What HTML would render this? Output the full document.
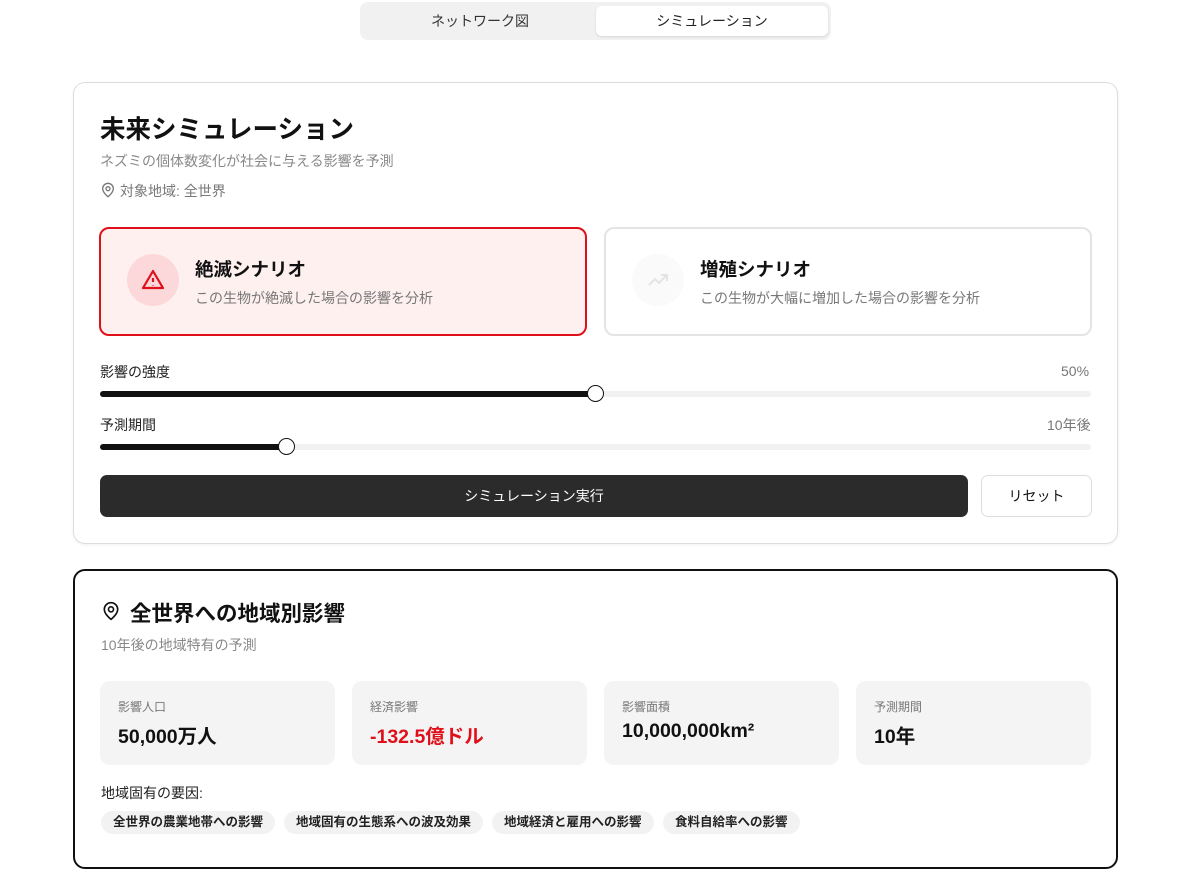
<!DOCTYPE html>
<html><head><meta charset="utf-8"><style>
*{box-sizing:border-box;margin:0;padding:0}
body{width:1200px;height:845px;overflow:hidden;background:#fff;font-family:"Liberation Sans","Noto Sans CJK JP",sans-serif;color:#111;position:relative}
.a{position:absolute}
.tabs{left:360px;top:2px;width:471px;height:38px;background:#f1f1f1;border-radius:8px}
.tab{top:4px;height:30px;width:232px;font-size:14px;line-height:30px;text-align:center;color:#222}
.card{left:73px;width:1045px;border-radius:12px}
.sc{top:227px;width:488px;height:109px;border-radius:10px}
.ic{left:26px;top:25px;width:52px;height:52px;border-radius:50%}
.st{left:94px;top:27px;font-size:18.5px;font-weight:bold}
.sd{left:94px;top:59px;font-size:14px;color:#777}
.lbl{font-size:14px;color:#222}
.track{left:100px;width:991px;height:6px;background:#f1f1f1;border-radius:3px}
.fill{left:0;top:0;height:6px;background:#111;border-radius:3px}
.thumb{width:17px;height:17px;border-radius:50%;background:#fff;border:1.5px solid #111}
.box{top:681px;width:235px;height:84px;background:#f4f4f4;border-radius:10px}
.bl{left:18px;top:17px;font-size:12px;color:#777}
.bv{left:18px;top:39px;font-size:19.5px;font-weight:bold}
.chip{top:811px;height:23px;background:#f2f2f2;border-radius:12px;font-size:12.5px;font-weight:bold;line-height:23px;padding:0 12px;color:#222}
</style></head><body>
<div class="a tabs"></div>
<div class="a tab" style="left:364px;top:6px;color:#333">ネットワーク図</div>
<div class="a tab" style="left:596px;top:6px;background:#fff;border-radius:6px;box-shadow:0 1px 2px rgba(0,0,0,.12)">シミュレーション</div>

<div class="a card" style="top:82px;height:462px;border:1px solid #ddd;box-shadow:0 1px 3px rgba(0,0,0,.06)"></div>
<div class="a" style="left:100px;top:109px;font-size:25.5px;font-weight:bold">未来シミュレーション</div>
<div class="a" style="left:100px;top:151px;font-size:14px;color:#888">ネズミの個体数変化が社会に与える影響を予測</div>
<svg class="a" style="left:100px;top:182px" width="16" height="16" viewBox="0 0 24 24" fill="none" stroke="#777" stroke-width="2"><path d="M20 10c0 6-8 12-8 12S4 16 4 10a8 8 0 0 1 16 0z"/><circle cx="12" cy="10" r="3"/></svg>
<div class="a" style="left:120px;top:181px;font-size:14px;color:#777">対象地域: 全世界</div>

<div class="a sc" style="left:99px;background:#fff0f0;border:2px solid #e0101a">
<div class="a ic" style="background:#fdd8da"><svg class="a" style="left:14px;top:14px" width="24" height="24" viewBox="0 0 24 24" fill="none" stroke="#e0101a" stroke-width="2.2" stroke-linejoin="round"><path d="M12 3 2 20h20z"/><path d="M12 10v4M12 17v.5"/></svg></div>
<div class="a st">絶滅シナリオ</div><div class="a sd">この生物が絶滅した場合の影響を分析</div></div>
<div class="a sc" style="left:604px;background:#fff;border:2px solid #e4e4e4">
<div class="a ic" style="background:#fafafa"><svg class="a" style="left:14px;top:14px" width="24" height="24" viewBox="0 0 24 24" fill="none" stroke="#e4e4e4" stroke-width="2"><path d="M3 17l6-6 4 4 8-8M15 7h6v6"/></svg></div>
<div class="a st">増殖シナリオ</div><div class="a sd">この生物が大幅に増加した場合の影響を分析</div></div>

<div class="a lbl" style="left:100px;top:362px">影響の強度</div>
<div class="a lbl" style="left:1061px;top:363px;color:#777">50%</div>
<div class="a track" style="top:391px"><div class="a fill" style="width:496px"></div></div>
<div class="a thumb" style="left:587px;top:385px"></div>
<div class="a lbl" style="left:100px;top:415px">予測期間</div>
<div class="a lbl" style="left:1047px;top:415px;color:#777">10年後</div>
<div class="a track" style="top:444px"><div class="a fill" style="width:187px"></div></div>
<div class="a thumb" style="left:278px;top:438px"></div>

<div class="a" style="left:100px;top:475px;width:868px;height:42px;background:#2b2b2b;border-radius:7px;color:#fff;font-size:14px;text-align:center;line-height:42px">シミュレーション実行</div>
<div class="a" style="left:981px;top:475px;width:111px;height:42px;border:1px solid #ddd;border-radius:7px;font-size:14px;text-align:center;line-height:40px">リセット</div>

<div class="a card" style="top:569px;height:300px;border:2px solid #111"></div>
<svg class="a" style="left:101px;top:601px" width="20" height="20" viewBox="0 0 24 24" fill="none" stroke="#111" stroke-width="2"><path d="M20 10c0 6-8 12-8 12S4 16 4 10a8 8 0 0 1 16 0z"/><circle cx="12" cy="10" r="3"/></svg>
<div class="a" style="left:130px;top:597px;font-size:21.5px;font-weight:bold">全世界への地域別影響</div>
<div class="a" style="left:101px;top:635px;font-size:14px;color:#888">10年後の地域特有の予測</div>

<div class="a box" style="left:100px"><div class="a bl">影響人口</div><div class="a bv">50,000万人</div></div>
<div class="a box" style="left:352px"><div class="a bl">経済影響</div><div class="a bv" style="color:#e0101a">-132.5億ドル</div></div>
<div class="a box" style="left:604px"><div class="a bl">影響面積</div><div class="a bv">10,000,000km²</div></div>
<div class="a box" style="left:856px"><div class="a bl">予測期間</div><div class="a bv">10年</div></div>

<div class="a" style="left:101px;top:783px;font-size:14px;color:#222">地域固有の要因:</div>
<div class="a chip" style="left:101px">全世界の農業地帯への影響</div>
<div class="a chip" style="left:284px">地域固有の生態系への波及効果</div>
<div class="a chip" style="left:492px">地域経済と雇用への影響</div>
<div class="a chip" style="left:663px">食料自給率への影響</div>
</body></html>
